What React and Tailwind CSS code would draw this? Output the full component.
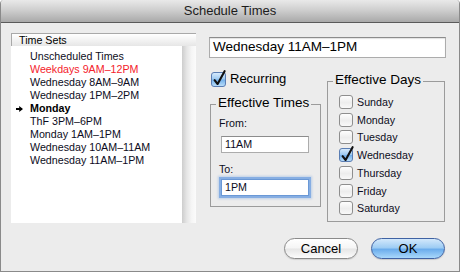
import React from "react";

const items = [
  { t: "Unscheduled Times" },
  { t: "Weekdays 9AM–12PM", red: true },
  { t: "Wednesday 8AM–9AM" },
  { t: "Wednesday 1PM–2PM" },
  { t: "Monday", bold: true, arrow: true },
  { t: "ThF 3PM–6PM" },
  { t: "Monday 1AM–1PM" },
  { t: "Wednesday 10AM–11AM" },
  { t: "Wednesday 11AM–1PM" },
];

const days = ["Sunday", "Monday", "Tuesday", "Wednesday", "Thursday", "Friday", "Saturday"];

function CheckBox({ checked, big }) {
  const size = big ? "w-[15px] h-[15px]" : "w-[14px] h-[14px]";
  const skin = checked
    ? "border-[#5a7db3] bg-[linear-gradient(to_bottom,#d6eafc,#9cc9f1_48%,#72afea_52%,#b8ddfa)]"
    : "border-[#8e8e8e] bg-[linear-gradient(to_bottom,#fefefe,#ededed_55%,#f9f9f9)]";
  return (
    <span className={`relative inline-block shrink-0 rounded-[3px] border ${size} ${skin}`}>
      {checked && (
        <svg
          className="absolute left-0 top-0 w-[14px] h-[14px] overflow-visible"
          viewBox="0 0 14 14"
        >
          <path
            d="M2.6 7.2 L5.6 11 L12.6 -1.8"
            stroke="#111"
            strokeWidth="2.1"
            fill="none"
            strokeLinecap="round"
            strokeLinejoin="round"
          />
        </svg>
      )}
    </span>
  );
}

export default function App() {
  return (
    <div className="w-[460px] h-[272px] bg-[#ececec] border-x border-b border-[#8a8a8a] rounded-t-[4px] overflow-hidden flex flex-col font-['Liberation_Sans',Arial,sans-serif] text-[#111]">
      <div className="h-[23px] shrink-0 border-b border-[#5a5a5a] bg-[linear-gradient(to_bottom,#e9e9e9,#cfcfcf_45%,#a9a9a9)] flex items-center justify-center text-[13px] text-[#1c1c1c]">
        Schedule Times
      </div>

      <div className="flex-1 flex flex-col pl-[10px] pt-[10px]">
        <div className="flex">
          {/* list */}
          <div className="w-[185px] h-[190px] flex flex-col shrink-0">
            <div className="h-[13px] shrink-0 border-t border-l border-[#a9a9a9] bg-[linear-gradient(to_bottom,#ffffff,#f3f3f3_50%,#e6e6e6)] text-[10.7px] leading-[12px] pl-[7px] text-[#000]">
              Time Sets
            </div>
            <div className="flex-1 flex">
              <div className="flex-1 bg-white pt-[4px]">
                {items.map((it, i) => (
                  <div key={i} className="h-[13px] flex items-center text-[10.7px] leading-[13px]">
                    <span className="w-[19px] shrink-0 pl-[5px] flex items-center">
                      {it.arrow && (
                        <svg width="7" height="6" viewBox="0 0 7 6">
                          <path d="M0 2 H3.2 V0 L7 3 L3.2 6 V4 H0 Z" fill="#000" />
                        </svg>
                      )}
                    </span>
                    <span
                      className={
                        it.red
                          ? "text-[#f4222b]"
                          : it.bold
                          ? "font-bold text-[#000]"
                          : "text-[#0c0c22]"
                      }
                    >
                      {it.t}
                    </span>
                  </div>
                ))}
              </div>
              <div className="w-[14px] shrink-0 bg-[linear-gradient(to_right,#cdcdcd,#e6e6e6_35%,#f6f6f6_70%,#fbfbfb)]"></div>
            </div>
          </div>

          {/* right */}
          <div className="ml-[13px] w-[237px] pt-[4px] flex flex-col">
            <div className="h-[21px] border border-[#acacac] border-t-[#8c8c8c] bg-white text-[13.5px] pl-[3px] flex items-center text-[#000] shadow-[inset_0_1px_1px_rgba(0,0,0,0.12)]">
              Wednesday 11AM–1PM
            </div>

            <div className="flex">
              <div className="w-[111px] shrink-0 flex flex-col">
                <div className="mt-[13px] h-[16px] flex items-center pl-[2px]">
                  <CheckBox checked big />
                  <span className="ml-[4px] text-[13px] text-[#000]">Recurring</span>
                </div>
                <fieldset className="mt-[8px] ml-[1px] w-[111px] border border-[#9b9b9b] pb-[10px]">
                  <legend className="ml-[5px] px-[2px] text-[13.5px] leading-[16px] pb-[3px] text-[#000]">
                    Effective Times
                  </legend>
                  <div className="mt-[2px] h-[14px] leading-[14px] pl-[8px] text-[10.7px] text-[#0c0c22]">
                    From:
                  </div>
                  <div className="mt-[6px] ml-[10px] w-[88px] h-[17px] border border-[#acacac] border-t-[#8c8c8c] bg-white pl-[3px] flex items-center text-[10.7px] text-[#0c0c22]">
                    11AM
                  </div>
                  <div className="mt-[9px] h-[14px] leading-[14px] pl-[8px] text-[10.7px] text-[#0c0c22]">
                    To:
                  </div>
                  <div className="mt-[3px] ml-[10px] w-[88px] h-[17px] border border-[#6a98d6] bg-white pl-[3px] flex items-center text-[10.7px] text-[#0c0c22] shadow-[0_0_0_2px_rgba(120,165,225,0.8),0_0_2px_3px_rgba(120,165,225,0.4)]">
                    1PM
                  </div>
                </fieldset>
              </div>

              <div className="ml-[7px] w-[118px] shrink-0">
                <fieldset className="mt-[14px] w-[118px] border border-[#9b9b9b] pt-[2px] pb-[4px]">
                  <legend className="ml-[5px] px-[2px] text-[13.5px] leading-[16px] pb-[3px] text-[#000]">
                    Effective Days
                  </legend>
                  {days.map((d) => (
                    <div key={d} className="h-[17.75px] flex items-center pl-[11px]">
                      <CheckBox checked={d === "Wednesday"} />
                      <span className="ml-[4px] text-[10.7px] text-[#0c0c22]">{d}</span>
                    </div>
                  ))}
                </fieldset>
              </div>
            </div>
          </div>
        </div>

        <div className="flex justify-end gap-[13px] pr-[14px] mt-[15px]">
          <button className="w-[74px] h-[21px] rounded-full border border-[#8a8a8a] bg-[linear-gradient(to_bottom,#ffffff,#f5f5f5_48%,#e6e6e6_52%,#fcfcfc)] text-[13px] text-[#000] flex items-center justify-center shadow-[0_1px_1px_rgba(0,0,0,0.12)]">
            Cancel
          </button>
          <button className="w-[74px] h-[21px] rounded-full border border-[#3f62a3] bg-[linear-gradient(to_bottom,#d3e8fb,#9fcdf4_45%,#6cadec_55%,#a9d8fb)] text-[13px] text-[#000] flex items-center justify-center shadow-[0_1px_1px_rgba(0,0,0,0.15)]">
            OK
          </button>
        </div>
      </div>
    </div>
  );
}
